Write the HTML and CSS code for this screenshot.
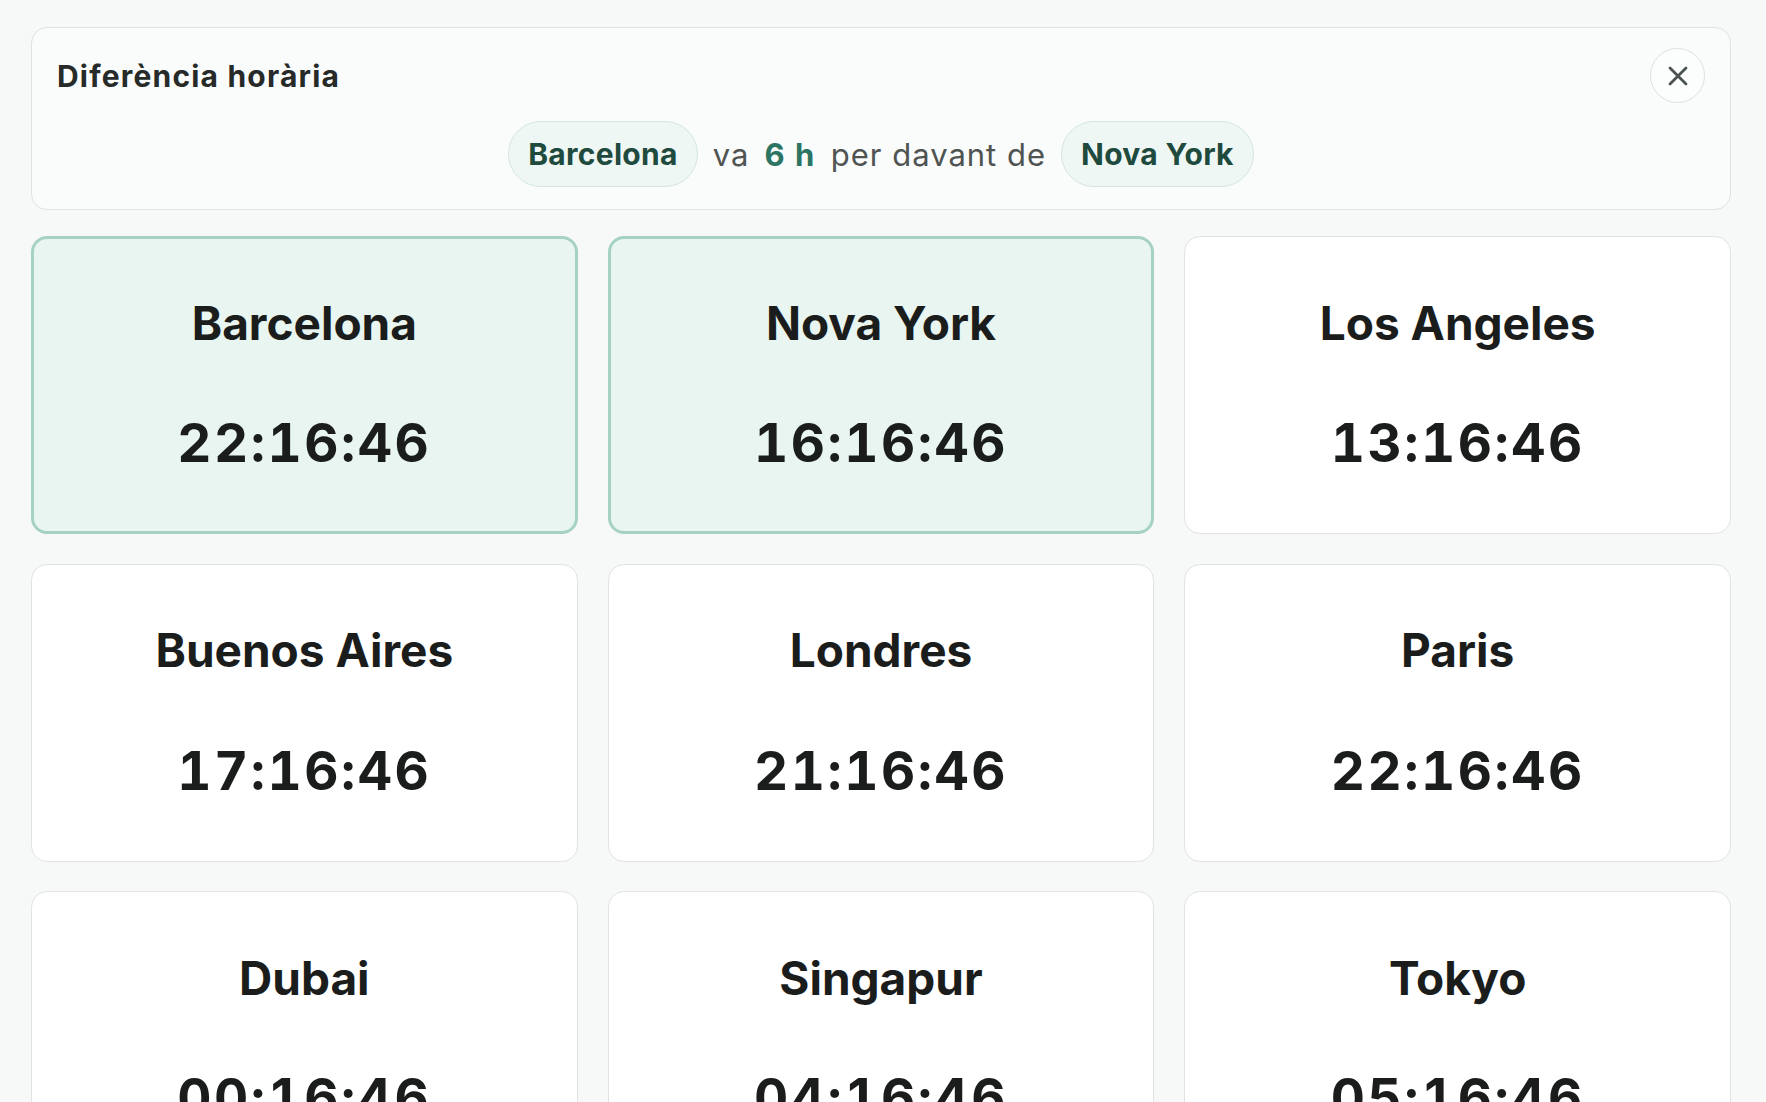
FILE: index.html
```html
<!DOCTYPE html>
<html lang="ca">
<head>
<meta charset="utf-8">
<title>Diferència horària</title>
<link rel="stylesheet" href="styles.css">
</head>
<body>
<main class="page">
  <section class="summary">
    <div class="summary-head">
      <h2 class="summary-title">Diferència horària</h2>
      <button class="close-btn" aria-label="Tanca">
        <svg width="22" height="22" viewBox="0 0 22 22"><path d="M3 3 L19 19 M19 3 L3 19" stroke="#4a5350" stroke-width="2.8" stroke-linecap="round" fill="none"/></svg>
      </button>
    </div>
    <div class="summary-line">
      <span class="pill">Barcelona</span>
      <span class="word">va</span>
      <span class="hours">6 h</span>
      <span class="word">per davant de</span>
      <span class="pill">Nova York</span>
    </div>
  </section>

  <section class="grid">
    <div class="card active"><div class="city">Barcelona</div><div class="time">22:16:46</div></div>
    <div class="card active"><div class="city">Nova York</div><div class="time">16:16:46</div></div>
    <div class="card"><div class="city">Los Angeles</div><div class="time">13:16:46</div></div>
    <div class="card"><div class="city">Buenos Aires</div><div class="time">17:16:46</div></div>
    <div class="card"><div class="city">Londres</div><div class="time">21:16:46</div></div>
    <div class="card"><div class="city">Paris</div><div class="time">22:16:46</div></div>
    <div class="card"><div class="city">Dubai</div><div class="time">00:16:46</div></div>
    <div class="card"><div class="city">Singapur</div><div class="time">04:16:46</div></div>
    <div class="card"><div class="city">Tokyo</div><div class="time">05:16:46</div></div>
  </section>
</main>
</body>
</html>
```

FILE: styles.css
```css
* { box-sizing: border-box; }
html, body { margin: 0; padding: 0; }
body {
  background: #f7f8f8;
  font-family: "Inter", "Lato", sans-serif;
  color: #1b1d1c;
  height: 1102px;
  overflow: hidden;
}
.page {
  padding: 27px 35px 0 31px;
}
.summary {
  background: #fafbfb;
  border: 1.5px solid #dfe3e2;
  border-radius: 16px;
  padding: 20px 25px 22px 25px;
}
.summary-head {
  display: flex;
  align-items: center;
  justify-content: space-between;
  height: 55px;
}
.summary-title {
  margin: 0;
  font-size: 30px;
  font-weight: 700;
  color: #262a28;
  letter-spacing: 1.2px;
}
.close-btn {
  width: 55px;
  height: 55px;
  border-radius: 50%;
  border: 1.5px solid #dde1e0;
  background: #fcfdfd;
  display: flex;
  align-items: center;
  justify-content: center;
  padding: 0;
}
.summary-line {
  margin-top: 18px;
  display: flex;
  justify-content: center;
  align-items: center;
  gap: 15px;
  font-size: 30px;
}
.pill {
  height: 66px;
  display: inline-flex;
  align-items: center;
  padding: 0 19px;
  border-radius: 33px;
  background: #eff7f4;
  border: 1.5px solid #d4e6df;
  color: #1f4a3e;
  font-weight: 700;
  letter-spacing: 0.3px;
}
.word {
  color: #4f5452;
  font-weight: 400;
  font-size: 31px;
  letter-spacing: 1px;
}
.hours {
  color: #2d7563;
  font-weight: 700;
  font-size: 31px;
  letter-spacing: 1.5px;
}
.grid {
  margin-top: 26px;
  display: grid;
  grid-template-columns: repeat(3, 1fr);
  column-gap: 30px;
  row-gap: 29.5px;
}
.card {
  height: 298px;
  background: #ffffff;
  border: 1.5px solid #e1e4e3;
  border-radius: 16px;
  display: flex;
  flex-direction: column;
  align-items: center;
  justify-content: center;
  gap: 66px;
}
.card.active {
  background: #e8f5f1;
  border: 3px solid #a6d1c5;
}
.city {
  font-size: 46px;
  font-weight: 700;
  line-height: 1.1;
  letter-spacing: 0px;
}
.time {
  font-size: 53px;
  font-weight: 700;
  line-height: 1.1;
  letter-spacing: 2.5px;
  font-variant-numeric: tabular-nums;
}
```
